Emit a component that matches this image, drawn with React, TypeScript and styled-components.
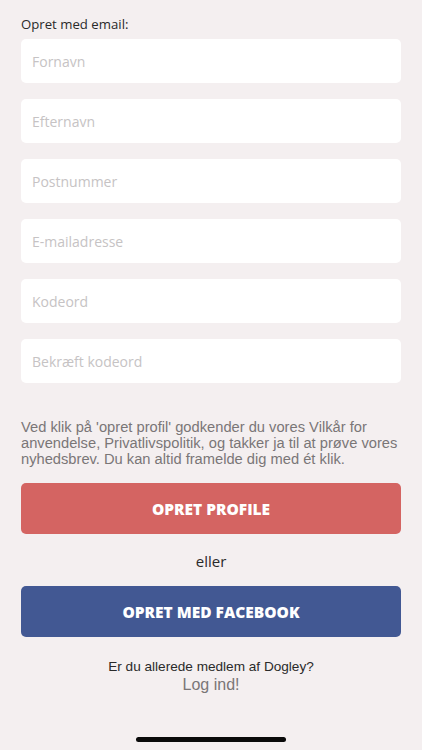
import styled, { createGlobalStyle } from 'styled-components';

const GlobalStyle = createGlobalStyle`
  html, body {
    margin: 0;
    padding: 0;
    background: #f4eff0;
  }
  * { box-sizing: border-box; }
`;

const fields = ['Fornavn', 'Efternavn', 'Postnummer', 'E-mailadresse', 'Kodeord', 'Bekræft kodeord'];

const Screen = styled.div`
  width: 422px;
  height: 750px;
  background: #f4eff0;
  padding: 14px 21px 0;
  display: flex;
  flex-direction: column;
  position: relative;
`;

const Label = styled.div`
  font-family: 'Open Sans', sans-serif;
  font-size: 13.2px;
  line-height: 20px;
  color: #2a2a2a;
  margin-bottom: 5px;
`;

const Fields = styled.div`
  display: flex;
  flex-direction: column;
  gap: 16px;
`;

const Field = styled.input`
  width: 100%;
  height: 44px;
  border: none;
  border-radius: 5px;
  background: #ffffff;
  padding: 0 11px;
  font-family: 'Open Sans', sans-serif;
  font-size: 14px;
  color: #333;
  outline: none;

  &::placeholder {
    color: #c6c3c4;
  }
`;

const Terms = styled.p`
  margin: 36px 0 16px;
  font-family: 'Liberation Sans', Arial, sans-serif;
  font-size: 14.7px;
  line-height: 16px;
  color: #7a7677;
`;

const Button = styled.button<{ $bg: string }>`
  width: 100%;
  height: 51px;
  border: none;
  border-radius: 5px;
  background: ${(p) => p.$bg};
  color: #ffffff;
  font-family: 'Open Sans', sans-serif;
  font-weight: 800;
  font-size: 15.5px;
  cursor: pointer;
`;

const Or = styled.div`
  font-family: 'Open Sans', sans-serif;
  font-size: 15px;
  color: #2a2a2a;
  text-align: center;
  line-height: 20px;
  margin: 17px 0 15px;
`;

const Member = styled.div`
  margin-top: 21px;
  text-align: center;
  font-family: 'Liberation Sans', Arial, sans-serif;
  font-size: 13.6px;
  line-height: 17px;
  color: #2a2a2a;
`;

const LogIn = styled.a`
  display: block;
  text-align: center;
  font-family: 'Liberation Sans', Arial, sans-serif;
  font-size: 16px;
  line-height: 20px;
  color: #7a7677;
  text-decoration: none;
`;

const HomeBar = styled.div`
  position: absolute;
  left: 136px;
  bottom: 8px;
  width: 150px;
  height: 5px;
  border-radius: 3px;
  background: #0a0a0a;
`;

export default function App() {
  return (
    <>
      <GlobalStyle />
      <Screen>
        <Label>Opret med email:</Label>
        <Fields>
          {fields.map((f) => (
            <Field key={f} placeholder={f} type={f.startsWith('Kode') || f.startsWith('Bekr') ? 'password' : 'text'} />
          ))}
        </Fields>
        <Terms>
          Ved klik på 'opret profil' godkender du vores Vilkår for anvendelse, Privatlivspolitik, og takker ja til at prøve vores nyhedsbrev. Du kan altid framelde dig med ét klik.
        </Terms>
        <Button $bg="#d46462">OPRET PROFILE</Button>
        <Or>eller</Or>
        <Button $bg="#425893">OPRET MED FACEBOOK</Button>
        <Member>Er du allerede medlem af Dogley?</Member>
        <LogIn href="#">Log ind!</LogIn>
        <HomeBar />
      </Screen>
    </>
  );
}
